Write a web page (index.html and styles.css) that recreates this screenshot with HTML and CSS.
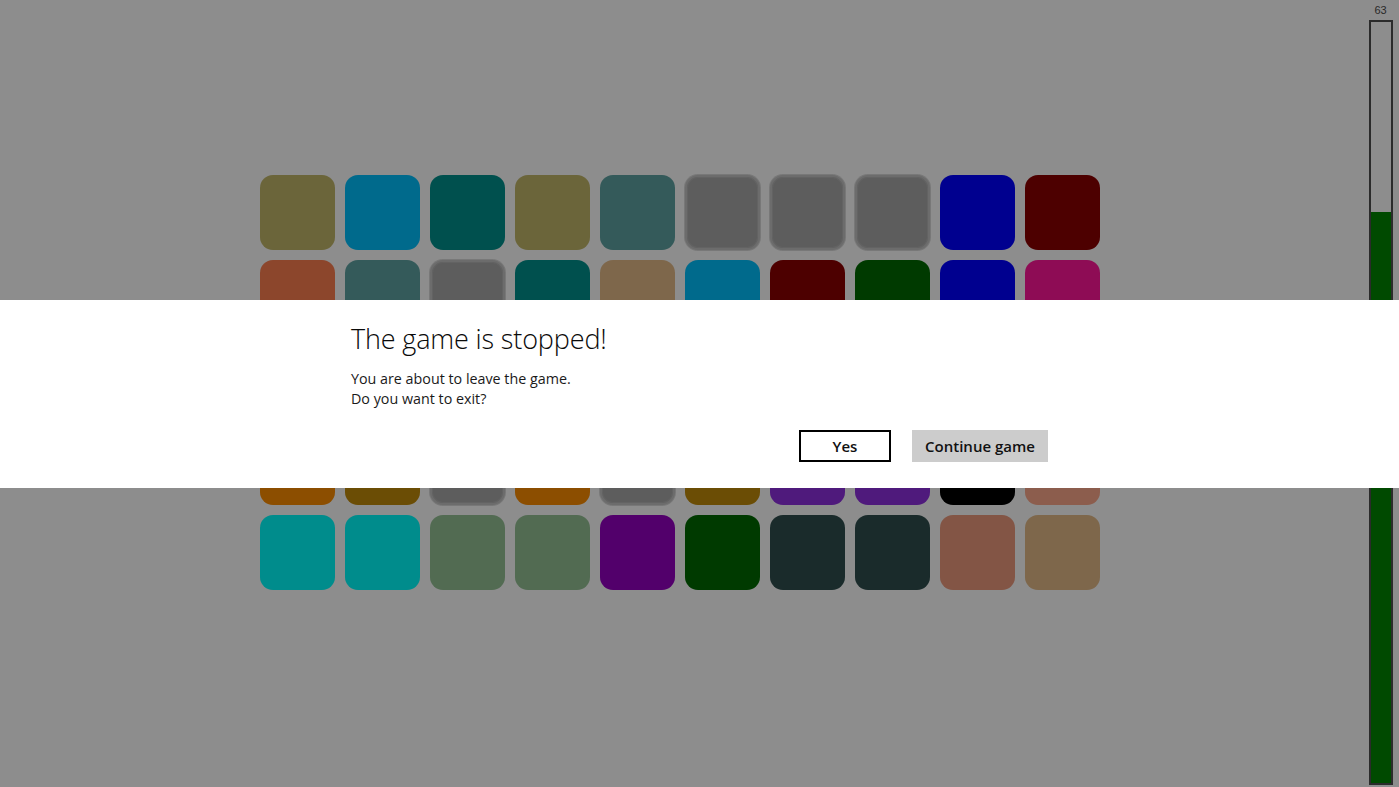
FILE: index.html
```html
<!DOCTYPE html>
<html lang="en">
<head>
<meta charset="utf-8">
<title>Colour Memory</title>
<link rel="stylesheet" href="styles.css">
</head>
<body>
<div class="app">
  <main class="board">
    <div class="grid">
      <div class="tile c-olive"></div>
      <div class="tile c-blue"></div>
      <div class="tile c-teal"></div>
      <div class="tile c-olive"></div>
      <div class="tile c-slate"></div>
      <div class="tile empty"></div>
      <div class="tile empty"></div>
      <div class="tile empty"></div>
      <div class="tile c-navy"></div>
      <div class="tile c-maroon"></div>

      <div class="tile c-rust"></div>
      <div class="tile c-slate"></div>
      <div class="tile empty"></div>
      <div class="tile c-teal"></div>
      <div class="tile c-tan"></div>
      <div class="tile c-blue"></div>
      <div class="tile c-maroon"></div>
      <div class="tile c-green"></div>
      <div class="tile c-navy"></div>
      <div class="tile c-magenta"></div>

      <div class="tile c-olive"></div>
      <div class="tile c-blue"></div>
      <div class="tile c-teal"></div>
      <div class="tile c-rust"></div>
      <div class="tile c-slate"></div>
      <div class="tile c-tan"></div>
      <div class="tile c-green"></div>
      <div class="tile c-magenta"></div>
      <div class="tile c-clay"></div>
      <div class="tile c-black"></div>

      <div class="tile c-orange"></div>
      <div class="tile c-brown"></div>
      <div class="tile empty"></div>
      <div class="tile c-orange"></div>
      <div class="tile empty"></div>
      <div class="tile c-brown"></div>
      <div class="tile c-violet"></div>
      <div class="tile c-violet"></div>
      <div class="tile c-black"></div>
      <div class="tile c-clay"></div>

      <div class="tile c-cyan"></div>
      <div class="tile c-cyan"></div>
      <div class="tile c-sage"></div>
      <div class="tile c-sage"></div>
      <div class="tile c-purple"></div>
      <div class="tile c-green"></div>
      <div class="tile c-ink"></div>
      <div class="tile c-ink"></div>
      <div class="tile c-clay2"></div>
      <div class="tile c-tan"></div>
    </div>
  </main>
  <aside class="meter">
    <div class="meter-label">63</div>
    <div class="meter-track">
      <div class="meter-fill" style="height: 75%"></div>
    </div>
  </aside>
</div>

<div class="dialog" role="dialog" aria-labelledby="dlg-title">
  <div class="dialog-inner">
    <h1 id="dlg-title" class="dialog-title">The game is stopped!</h1>
    <p class="dialog-text">You are about to leave the game.<br>Do you want to exit?</p>
    <div class="dialog-actions">
      <button class="btn btn-outline">Yes</button>
      <button class="btn btn-filled">Continue game</button>
    </div>
  </div>
</div>
</body>
</html>
```
FILE: styles.css
```css
* { box-sizing: border-box; }

html, body {
  margin: 0;
  height: 100%;
}

body {
  background: #8d8d8d;
  font-family: "Open Sans", "Noto Sans", sans-serif;
  overflow: hidden;
}

.app {
  display: flex;
  height: 787px;
}

.board {
  flex: 1;
  display: flex;
  justify-content: center;
  padding-top: 175px;
}

.grid {
  display: grid;
  grid-template-columns: repeat(10, 75px);
  grid-auto-rows: 75px;
  gap: 10px;
  margin-right: 1px;
  align-self: flex-start;
}

.tile {
  border-radius: 13px;
}

.tile.empty {
  background: #5d5d5d;
  border: 2px solid #6c6c6c;
  box-shadow: inset 0 0 0 1px #636363, 0 0 0 1px #787878;
}

.c-olive   { background: #6b653a; }
.c-blue    { background: #006a8c; }
.c-teal    { background: #00504e; }
.c-slate   { background: #345a5a; }
.c-navy    { background: #00008f; }
.c-maroon  { background: #4d0000; }
.c-rust    { background: #8c462c; }
.c-tan     { background: #7e674b; }
.c-green   { background: #003a00; }
.c-magenta { background: #8e0c55; }
.c-clay    { background: #8c5d4d; }
.c-black   { background: #000000; }
.c-orange  { background: #8c4e00; }
.c-brown   { background: #6b4d05; }
.c-violet  { background: #4f1a7c; }
.c-cyan    { background: #008c8c; }
.c-sage    { background: #526b52; }
.c-purple  { background: #52006b; }
.c-ink     { background: #1a2b2b; }
.c-clay2   { background: #835545; }

.meter {
  width: 39px;
  display: flex;
  flex-direction: column;
  align-items: flex-start;
  padding: 3px 0 2px 9px;
}

.meter-label {
  width: 23px;
  text-align: center;
  font-family: "Liberation Sans", sans-serif;
  font-size: 11px;
  line-height: 14px;
  color: #2a2a2a;
  margin-bottom: 3px;
}

.meter-track {
  flex: 1;
  width: 24px;
  border: 2px solid #2b2b2b;
  display: flex;
  flex-direction: column;
  justify-content: flex-end;
}

.meter-fill {
  background: #004a00;
}

.dialog {
  position: absolute;
  left: 0;
  right: 0;
  top: 300px;
  height: 188px;
  background: #ffffff;
}

.dialog-inner {
  width: 697px;
  margin-left: 351px;
  padding-top: 19px;
}

.dialog-title {
  margin: 0;
  font-family: "Open Sans", sans-serif;
  font-weight: 300;
  font-size: 27px;
  line-height: 40px;
  color: #0a0a0a;
  letter-spacing: -0.15px;
}

.dialog-text {
  margin: 10px 0 0;
  font-size: 14.3px;
  line-height: 20px;
  color: #1a1a1a;
}

.dialog-actions {
  display: flex;
  justify-content: flex-end;
  gap: 21px;
  margin-top: 21px;
}

.btn {
  height: 32px;
  font-family: "Open Sans", sans-serif;
  font-size: 15px;
  font-weight: 600;
  color: #111111;
  padding: 0;
  cursor: pointer;
}

.btn-outline {
  width: 92px;
  background: #ffffff;
  border: 2px solid #000000;
}

.btn-filled {
  width: 136px;
  background: #cccccc;
  border: none;
}
```
